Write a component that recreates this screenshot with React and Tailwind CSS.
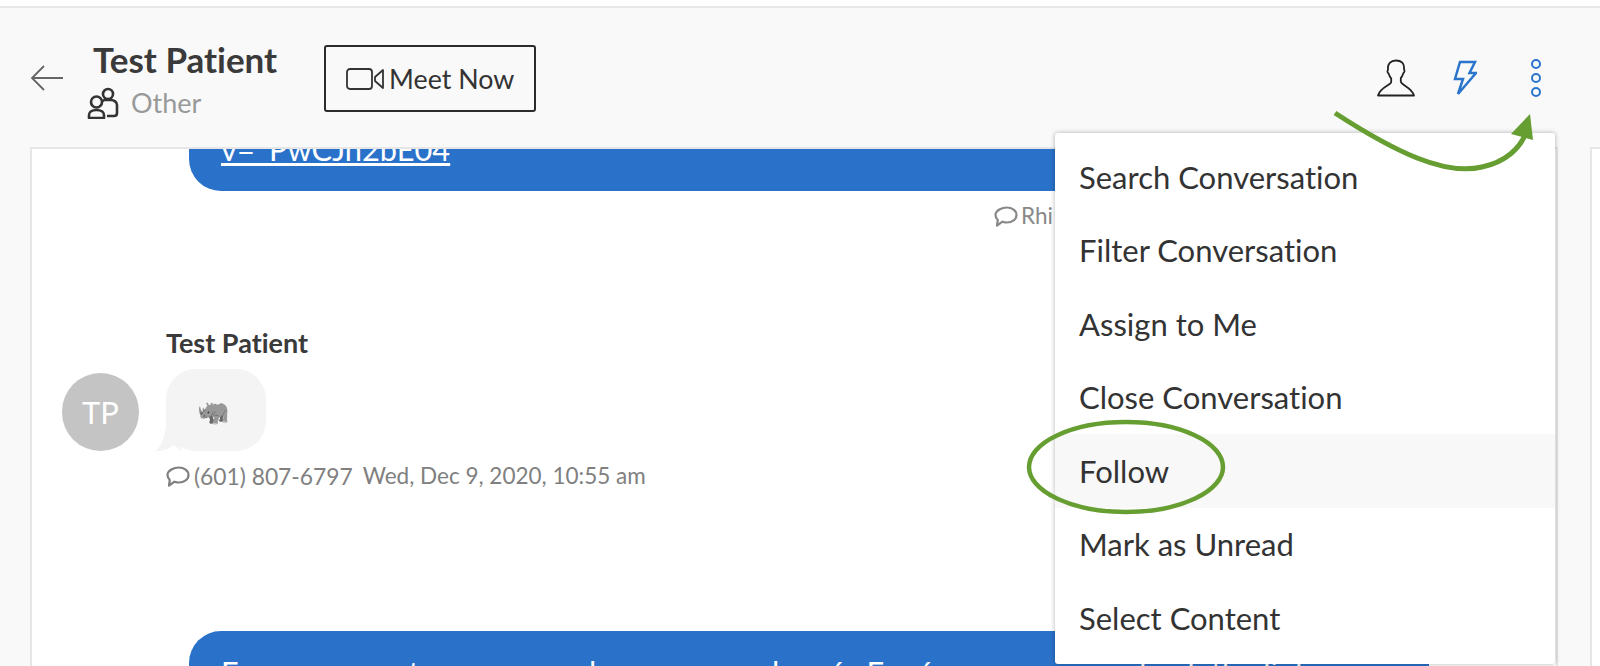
const menuItems = ["Search Conversation", "Filter Conversation", "Assign to Me", "Close Conversation", "Follow", "Mark as Unread", "Select Content"]

const ChatIcon = ({ className }) => (
    <svg viewBox="0 0 24 24" fill="none" stroke="currentColor" strokeWidth="2.2" className={className}>
        <path d="M13 3.500c5 0 9.500 3 9.500 7.500s-4.500 7.500-9.500 7.500c-1.500 0-3-.3-4.500-.8L3 21.500l.8-5.500C2.300 14.600 1.500 13 1.500 11c0-4.500 6.500-7.500 11.500-7.500z" strokeLinejoin="round" />
    </svg>
)

const App = () => {
    return (
        <div className="relative h-[666px] w-[1600px] overflow-hidden bg-white font-['Lato',sans-serif] [font-variant-ligatures:none]">
            <div className="mt-[6px] flex h-[660px] flex-col border-t-2 border-[#e8e8e8] bg-[#f9f9f9]">
                <div className="flex h-[139px] shrink-0 items-start justify-between pl-[30px] pr-[59px]">
                    <div className="flex items-start">
                        <svg viewBox="0 0 34 28" fill="none" stroke="#666" strokeWidth="1.800" className="mt-[56px] h-[28px] w-[34px]">
                            <path d="M33 14H2M14 2L2 14l12 12" />
                        </svg>
                        <div className="ml-[23px] mt-[31px]">
                            <div className="ml-[6px] text-[35px] leading-[40px] font-bold text-[#3a3a3a]">Test Patient</div>
                            <div className="mt-[8px] flex items-center gap-[12px] text-[27px] leading-[30px] text-[#999]">
                                <svg viewBox="0 0 32 32" fill="none" stroke="#333" strokeWidth="2.600" className="h-[32px] w-[32px]">
                                    <circle cx="21" cy="7" r="5" />
                                    <path d="M15 14.500c1-1 2-1.500 3-1.500h6c3 0 6 2 6 5v8c0 2-1 3-3 3h-7" strokeLinejoin="round" />
                                    <circle cx="9.500" cy="15" r="5.500" />
                                    <path d="M2 31v-3c0-3 3-5 7.500-5s7.500 2 7.500 5v3z" strokeLinejoin="round" />
                                </svg>
                                <span>Other</span>
                            </div>
                        </div>
                        <button className="ml-[47px] mt-[37px] flex h-[67px] w-[212px] items-center justify-center gap-[5px] rounded-[3px] border-2 border-[#2b2b2b] pt-[1px] text-[26.800px] text-[#333]">
                            <svg viewBox="0 0 38 24" fill="none" stroke="#333" strokeWidth="1.800" className="h-[24px] w-[38px]">
                                <rect x="1" y="2" width="25" height="20" rx="3" />
                                <path d="M37 3v18l-8-7v-4z" strokeLinejoin="round" />
                            </svg>
                            <span>Meet Now</span>
                        </button>
                    </div>
                    <div className="mt-[51px] flex items-center">
                        <svg viewBox="0 0 38 38" fill="none" stroke="#222" strokeWidth="1.800" className="h-[38px] w-[38px]">
                            <path d="M19 1.500c-5.500 0-8.500 3.500-8 8.500.1 1.300-.8 1.500-.4 3 .3 1 1 1.500 1.400 2.500.5 1.700 1.200 3 2.200 4v3.500C14.200 26 3.500 28 1 36.500h36c-2.500-8.500-13.200-10.500-13.200-14V19c1-1 1.700-2.300 2.200-4 .4-1 1.100-1.500 1.400-2.500.4-1.500-.5-1.700-.4-3 .5-5-2.500-8-8-8z" strokeLinejoin="round" />
                        </svg>
                        <svg viewBox="0 0 24 37" fill="none" stroke="#2a74cc" strokeWidth="2.500" className="ml-[38px] h-[37px] w-[24px]">
                            <path d="M7 2h15l-5.500 11H23L5 34l5-15H2z" />
                        </svg>
                        <div className="ml-[54px] flex flex-col gap-[4px]">
                            <span className="h-[10px] w-[10px] rounded-full border-2 border-[#2a74cc]" />
                            <span className="h-[10px] w-[10px] rounded-full border-2 border-[#2a74cc]" />
                            <span className="h-[10px] w-[10px] rounded-full border-2 border-[#2a74cc]" />
                        </div>
                    </div>
                </div>
                <div className="flex min-h-0 flex-1 gap-[32px] pl-[30px]">
                    <div className="flex w-[1528px] shrink-0 flex-col overflow-hidden border-x-2 border-t-2 border-[#e6e6e6] bg-white">
                        <div className="ml-[157px] flex h-[42px] w-[1100px] shrink-0 items-start rounded-bl-[32px] bg-[#2a72c9] pl-[32px]">
                            <span className="mt-[-14px] text-[30.800px] leading-[30px] text-white underline">v=_PwCJn2bE04</span>
                        </div>
                        <div className="mt-[13px] flex h-[24px] shrink-0 items-center justify-end pr-[503px] text-[22.500px] text-[#888]">
                            <ChatIcon className="mr-[3px] h-[24px] w-[24px] shrink-0" />
                            <span>Rhi</span>
                        </div>
                        <div className="ml-[30px] mt-[100px] flex shrink-0 flex-col">
                            <div className="ml-[104px] text-[27px] leading-[30px] font-bold text-[#3a3a3a]">Test Patient</div>
                            <div className="mt-[11px] flex items-end">
                                <div className="flex h-[78px] w-[77px] items-center justify-center rounded-full bg-[#c4c4c4] text-[31px] text-white">TP</div>
                                <div className="relative ml-[27px] flex h-[82px] w-[100px] items-center justify-center rounded-[30px] bg-[#f4f4f4] pr-[6px] text-[26px]">
                                    <svg viewBox="0 0 26 36" className="absolute bottom-0 left-[-11px] h-[36px] w-[26px]" fill="#f4f4f4">
                                        <path d="M11 0C12 16 8 30 0 36C8 36 14 34 19 30L26 36V0z" />
                                    </svg>
                                    <span className="relative grayscale">🦏</span>
                                </div>
                            </div>
                            <div className="ml-[104px] mt-[12px] flex items-center text-[22.800px] leading-[26px] text-[#808080]">
                                <ChatIcon className="mr-[4px] h-[24px] w-[24px] shrink-0" />
                                <span>(601) 807-6797</span>
                                <span className="ml-[10px] text-[22.500px]">Wed, Dec 9, 2020, 10:55 am</span>
                            </div>
                        </div>
                        <div className="ml-[157px] mt-[142px] h-[80px] w-[1240px] shrink-0 rounded-t-[32px] bg-[#2a72c9] pl-[32px] pt-[24px] text-[30.800px] leading-[36px] whitespace-nowrap text-white">
                            For more great resources, please see our lanués Fonó on your care, check the link
                        </div>
                    </div>
                    <div className="min-w-0 flex-1 border-l-2 border-t-2 border-[#e6e6e6] bg-white" />
                </div>
            </div>

            <div className="absolute left-[1055px] top-[133px] w-[500px] rounded-[3px] bg-white pb-[9px] pt-[7px] shadow-[0_0_5px_rgba(0,0,0,0.3)]">
                {menuItems.map((item) => (
                    <div key={item} className={`flex h-[73.500px] items-center pl-[24px] text-[31px] text-[#333] ${item === "Follow" ? "bg-[#f8f8f8]" : ""}`}>
                        {item}
                    </div>
                ))}
            </div>

            <svg viewBox="0 0 1600 666" fill="none" className="pointer-events-none absolute inset-0 h-[666px] w-[1600px]">
                <path d="M1335 113C1395 152 1445 176 1482 167C1506 162 1520 148 1526 133" stroke="#669e32" strokeWidth="5" />
                <path d="M1530 114L1511 134L1533 140z" fill="#669e32" />
                <ellipse cx="1126" cy="467" rx="97" ry="45" stroke="#669e32" strokeWidth="4.500" />
            </svg>
        </div>
    )
}

export default App
